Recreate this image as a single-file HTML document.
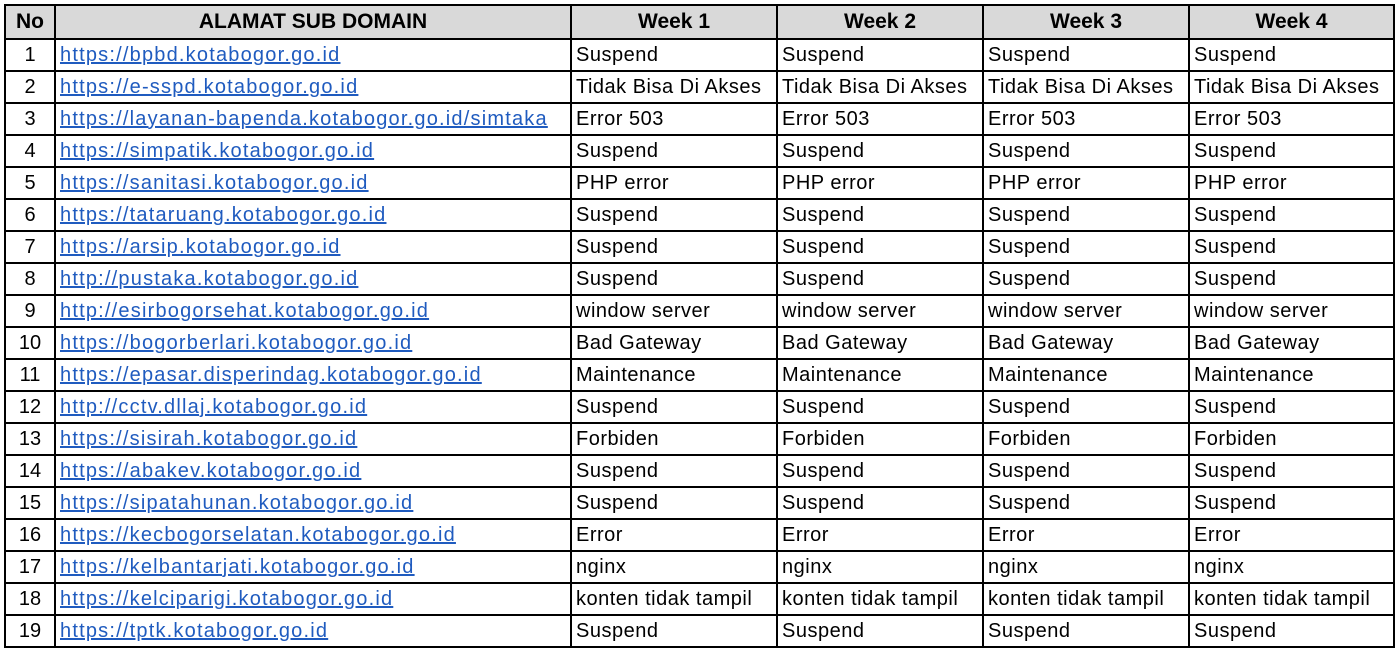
<!DOCTYPE html>
<html><head><meta charset="utf-8"><style>
body{margin:0;background:#fff;width:1398px;height:650px;overflow:hidden;font-family:"Liberation Sans",sans-serif;}
table{position:absolute;left:4px;top:4px;border-collapse:collapse;table-layout:fixed;}
td,th{border:2px solid #000;padding:0 0 0 4px;font-size:20px;height:30px;white-space:nowrap;overflow:hidden;color:#000;letter-spacing:0.5px;}
th{background:#d9d9d9;font-weight:bold;height:32px;text-align:center;padding:0;letter-spacing:0;font-size:21px;}
td.n{text-align:center;padding:0;letter-spacing:0;}
td.u{letter-spacing:1.2px;}
a{color:#1f5bbf;text-decoration:underline;}
</style></head><body>
<table>
<colgroup><col style="width:50px"><col style="width:516px"><col style="width:206px"><col style="width:206px"><col style="width:206px"><col style="width:205px"></colgroup>
<tr><th>No</th><th>ALAMAT SUB DOMAIN</th><th>Week 1</th><th>Week 2</th><th>Week 3</th><th>Week 4</th></tr>
<tr><td class="n">1</td><td class="u"><a>https://bpbd.kotabogor.go.id</a></td><td>Suspend</td><td>Suspend</td><td>Suspend</td><td>Suspend</td></tr>
<tr><td class="n">2</td><td class="u"><a>https://e-sspd.kotabogor.go.id</a></td><td>Tidak Bisa Di Akses</td><td>Tidak Bisa Di Akses</td><td>Tidak Bisa Di Akses</td><td>Tidak Bisa Di Akses</td></tr>
<tr><td class="n">3</td><td class="u"><a>https://layanan-bapenda.kotabogor.go.id/simtaka</a></td><td>Error 503</td><td>Error 503</td><td>Error 503</td><td>Error 503</td></tr>
<tr><td class="n">4</td><td class="u"><a>https://simpatik.kotabogor.go.id</a></td><td>Suspend</td><td>Suspend</td><td>Suspend</td><td>Suspend</td></tr>
<tr><td class="n">5</td><td class="u"><a>https://sanitasi.kotabogor.go.id</a></td><td>PHP error</td><td>PHP error</td><td>PHP error</td><td>PHP error</td></tr>
<tr><td class="n">6</td><td class="u"><a>https://tataruang.kotabogor.go.id</a></td><td>Suspend</td><td>Suspend</td><td>Suspend</td><td>Suspend</td></tr>
<tr><td class="n">7</td><td class="u"><a>https://arsip.kotabogor.go.id</a></td><td>Suspend</td><td>Suspend</td><td>Suspend</td><td>Suspend</td></tr>
<tr><td class="n">8</td><td class="u"><a>http://pustaka.kotabogor.go.id</a></td><td>Suspend</td><td>Suspend</td><td>Suspend</td><td>Suspend</td></tr>
<tr><td class="n">9</td><td class="u"><a>http://esirbogorsehat.kotabogor.go.id</a></td><td>window server</td><td>window server</td><td>window server</td><td>window server</td></tr>
<tr><td class="n">10</td><td class="u"><a>https://bogorberlari.kotabogor.go.id</a></td><td>Bad Gateway</td><td>Bad Gateway</td><td>Bad Gateway</td><td>Bad Gateway</td></tr>
<tr><td class="n">11</td><td class="u"><a>https://epasar.disperindag.kotabogor.go.id</a></td><td>Maintenance</td><td>Maintenance</td><td>Maintenance</td><td>Maintenance</td></tr>
<tr><td class="n">12</td><td class="u"><a>http://cctv.dllaj.kotabogor.go.id</a></td><td>Suspend</td><td>Suspend</td><td>Suspend</td><td>Suspend</td></tr>
<tr><td class="n">13</td><td class="u"><a>https://sisirah.kotabogor.go.id</a></td><td>Forbiden</td><td>Forbiden</td><td>Forbiden</td><td>Forbiden</td></tr>
<tr><td class="n">14</td><td class="u"><a>https://abakev.kotabogor.go.id</a></td><td>Suspend</td><td>Suspend</td><td>Suspend</td><td>Suspend</td></tr>
<tr><td class="n">15</td><td class="u"><a>https://sipatahunan.kotabogor.go.id</a></td><td>Suspend</td><td>Suspend</td><td>Suspend</td><td>Suspend</td></tr>
<tr><td class="n">16</td><td class="u"><a>https://kecbogorselatan.kotabogor.go.id</a></td><td>Error</td><td>Error</td><td>Error</td><td>Error</td></tr>
<tr><td class="n">17</td><td class="u"><a>https://kelbantarjati.kotabogor.go.id</a></td><td>nginx</td><td>nginx</td><td>nginx</td><td>nginx</td></tr>
<tr><td class="n">18</td><td class="u"><a>https://kelciparigi.kotabogor.go.id</a></td><td>konten tidak tampil</td><td>konten tidak tampil</td><td>konten tidak tampil</td><td>konten tidak tampil</td></tr>
<tr><td class="n">19</td><td class="u"><a>https://tptk.kotabogor.go.id</a></td><td>Suspend</td><td>Suspend</td><td>Suspend</td><td>Suspend</td></tr>
</table>
</body></html>
